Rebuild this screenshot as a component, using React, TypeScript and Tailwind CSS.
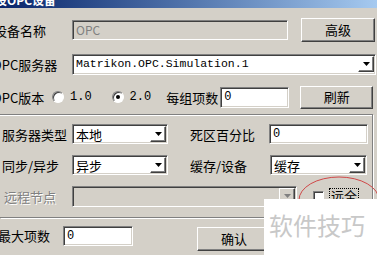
import React from "react";

const cjk = "font-['Noto_Sans_CJK_SC',sans-serif]";
const mono = "font-['Liberation_Mono','Noto_Sans_CJK_SC',monospace]";

// sunken edit box, classic windows
const Sunken = ({ className = "", children }: { className?: string; children?: React.ReactNode }) => (
  <div
    className={`flex items-center border border-t-[#808080] border-l-[#808080] border-b-white border-r-white shadow-[inset_1px_1px_0_#404040,inset_-1px_-1px_0_#d4d0c8] ${className}`}
  >
    {children}
  </div>
);

const Btn = ({ className = "", children }: { className?: string; children?: React.ReactNode }) => (
  <div
    className={`flex items-center justify-center border border-t-white border-l-white border-b-[#404040] border-r-[#404040] shadow-[inset_-1px_-1px_0_#808080] text-[13px] text-black ${className}`}
  >
    {children}
  </div>
);

const Arrow = ({ disabled = false }: { disabled?: boolean }) => (
  <Btn className="w-[16px] h-[16px] shrink-0 mr-[1px]">
    <svg width="7" height="4" viewBox="0 0 7 4">
      <polygon points="0,0 7,0 3.5,4" fill={disabled ? "#808080" : "#000"} />
    </svg>
  </Btn>
);

const Combo = ({ className = "", text, textClass = "", disabled = false }: { className?: string; text?: string; textClass?: string; disabled?: boolean }) => (
  <Sunken className={`${disabled ? "bg-[#d4d0c8]" : "bg-white"} ${className}`}>
    <div className={`flex-1 pl-[3px] leading-none ${textClass}`}>{text}</div>
    <Arrow disabled={disabled} />
  </Sunken>
);

const Radio = ({ checked = false }: { checked?: boolean }) => (
  <div className="w-[12px] h-[12px] rounded-full bg-white border border-t-[#808080] border-l-[#808080] border-b-white border-r-white shadow-[inset_1px_1px_0_#404040] flex items-center justify-center">
    {checked && <div className="w-[4px] h-[4px] rounded-full bg-black" />}
  </div>
);

export default function App() {
  return (
    <div className={`relative w-[377px] h-[255px] overflow-hidden bg-[#d4d0c8] text-black ${cjk}`}>
      {/* title bar */}
      <div className="h-[8px] overflow-hidden bg-linear-to-r from-[#0a246a] to-[#a6caf0]">
        <div className="-mt-[6px] -ml-[5px] text-[12px] leading-[12px] font-bold text-white">设OPC设备</div>
      </div>

      {/* device name */}
      <div className="mt-[10px] h-[24px] flex items-center">
        <div className="w-[72px] text-[13px] leading-none -ml-[6px] pr-[0px]">
          <span>设备名称</span>
        </div>
        <Sunken className="ml-[6px] w-[216px] h-[20px] bg-[#d4d0c8]">
          <span className={`pl-[3px] text-[12px] text-[#808080] ${cjk}`}>OPC</span>
        </Sunken>
        <Btn className="ml-[13px] w-[74px] h-[24px]">高级</Btn>
      </div>

      {/* server */}
      <div className="mt-[10px] h-[24px] flex items-center">
        <div className="w-[80px] -ml-[8px] text-[13px] leading-none">OPC服务器</div>
        <Combo className="w-[304px] h-[21px]" text="Matrikon.OPC.Simulation.1" textClass={`${mono} text-[11.5px]`} />
      </div>

      {/* version */}
      <div className="mt-[9px] h-[24px] flex items-center">
        <div className="w-[60px] -ml-[8px] text-[13px] leading-none">OPC版本</div>
        <Radio />
        <span className={`ml-[6px] ${mono} text-[12px]`}>1.0</span>
        <div className="ml-[20px]">
          <Radio checked />
        </div>
        <span className={`ml-[6px] ${mono} text-[12px]`}>2.0</span>
        <span className="ml-[15px] text-[13px] leading-none">每组项数</span>
        <Sunken className="ml-[2px] w-[69px] h-[21px] bg-white">
          <span className={`pl-[3px] ${mono} text-[12px]`}>0</span>
        </Sunken>
        <Btn className="ml-[11px] w-[73px] h-[23px]">刷新</Btn>
      </div>

      {/* group box */}
      <div className="mt-[5px] w-[373px] h-[104px] border-t border-r border-b border-[#808080] shadow-[1px_1px_0_#fff,inset_0_1px_0_#fff] flex flex-col pt-[8px] gap-[9px]">
        <div className="h-[22px] flex items-center">
          <div className="w-[72px] pl-[2px] text-[13px] leading-none">服务器类型</div>
          <Combo className="w-[96px] h-[20px]" text="本地" textClass="text-[13px]" />
          <div className="ml-[22px] w-[79px] text-[13px] leading-none">死区百分比</div>
          <Sunken className="w-[99px] h-[20px] bg-white">
            <span className={`pl-[3px] ${mono} text-[12px]`}>0</span>
          </Sunken>
        </div>
        <div className="h-[22px] flex items-center">
          <div className="w-[72px] pl-[2px] text-[13px] leading-none">同步/异步</div>
          <Combo className="w-[96px] h-[20px]" text="异步" textClass="text-[13px]" />
          <div className="ml-[22px] w-[80px] text-[13px] leading-none">缓存/设备</div>
          <Combo className="w-[97px] h-[20px]" text="缓存" textClass="text-[13px]" />
        </div>
        <div className="h-[22px] flex items-center">
          <div className="w-[72px] pl-[4px] text-[13px] leading-none text-[#808080] [text-shadow:1px_1px_0_#fff]">远程节点</div>
          <Combo className="w-[225px] h-[21px]" disabled />
          <div className="ml-[16px] w-[11px] h-[11px] bg-white border border-t-[#808080] border-l-[#808080] border-b-white border-r-white shadow-[inset_1px_1px_0_#404040]" />
          <div className="ml-[5px] px-[1px] border border-dotted border-black text-[13px] leading-[14px]">远全</div>
        </div>
      </div>

      {/* max items */}
      <div className="mt-[8px] h-[24px] flex items-start">
        <div className="w-[63px] -ml-[2px] pt-[3px] text-[13px] leading-none">最大项数</div>
        <Sunken className="ml-[2px] w-[70px] h-[20px] bg-white">
          <span className={`pl-[3px] ${mono} text-[12px]`}>0</span>
        </Sunken>
        <Btn className="ml-[64px] mt-[1px] w-[74px] h-[24px]">确认</Btn>
      </div>

      {/* red mark */}
      <svg className="absolute left-[296px] top-[175px]" width="90" height="52" viewBox="0 0 90 52">
        <ellipse cx="43" cy="25" rx="40" ry="23" fill="none" stroke="#d04848" strokeWidth="1" />
      </svg>

      {/* watermark */}
      <div className="absolute left-[264px] top-[199px] right-0 bottom-0 bg-white">
        <div className={`pl-[5px] pt-[13px] text-[24px] leading-[26px] text-[#c8c8c8] ${cjk}`}>软件技巧</div>
      </div>
    </div>
  );
}
